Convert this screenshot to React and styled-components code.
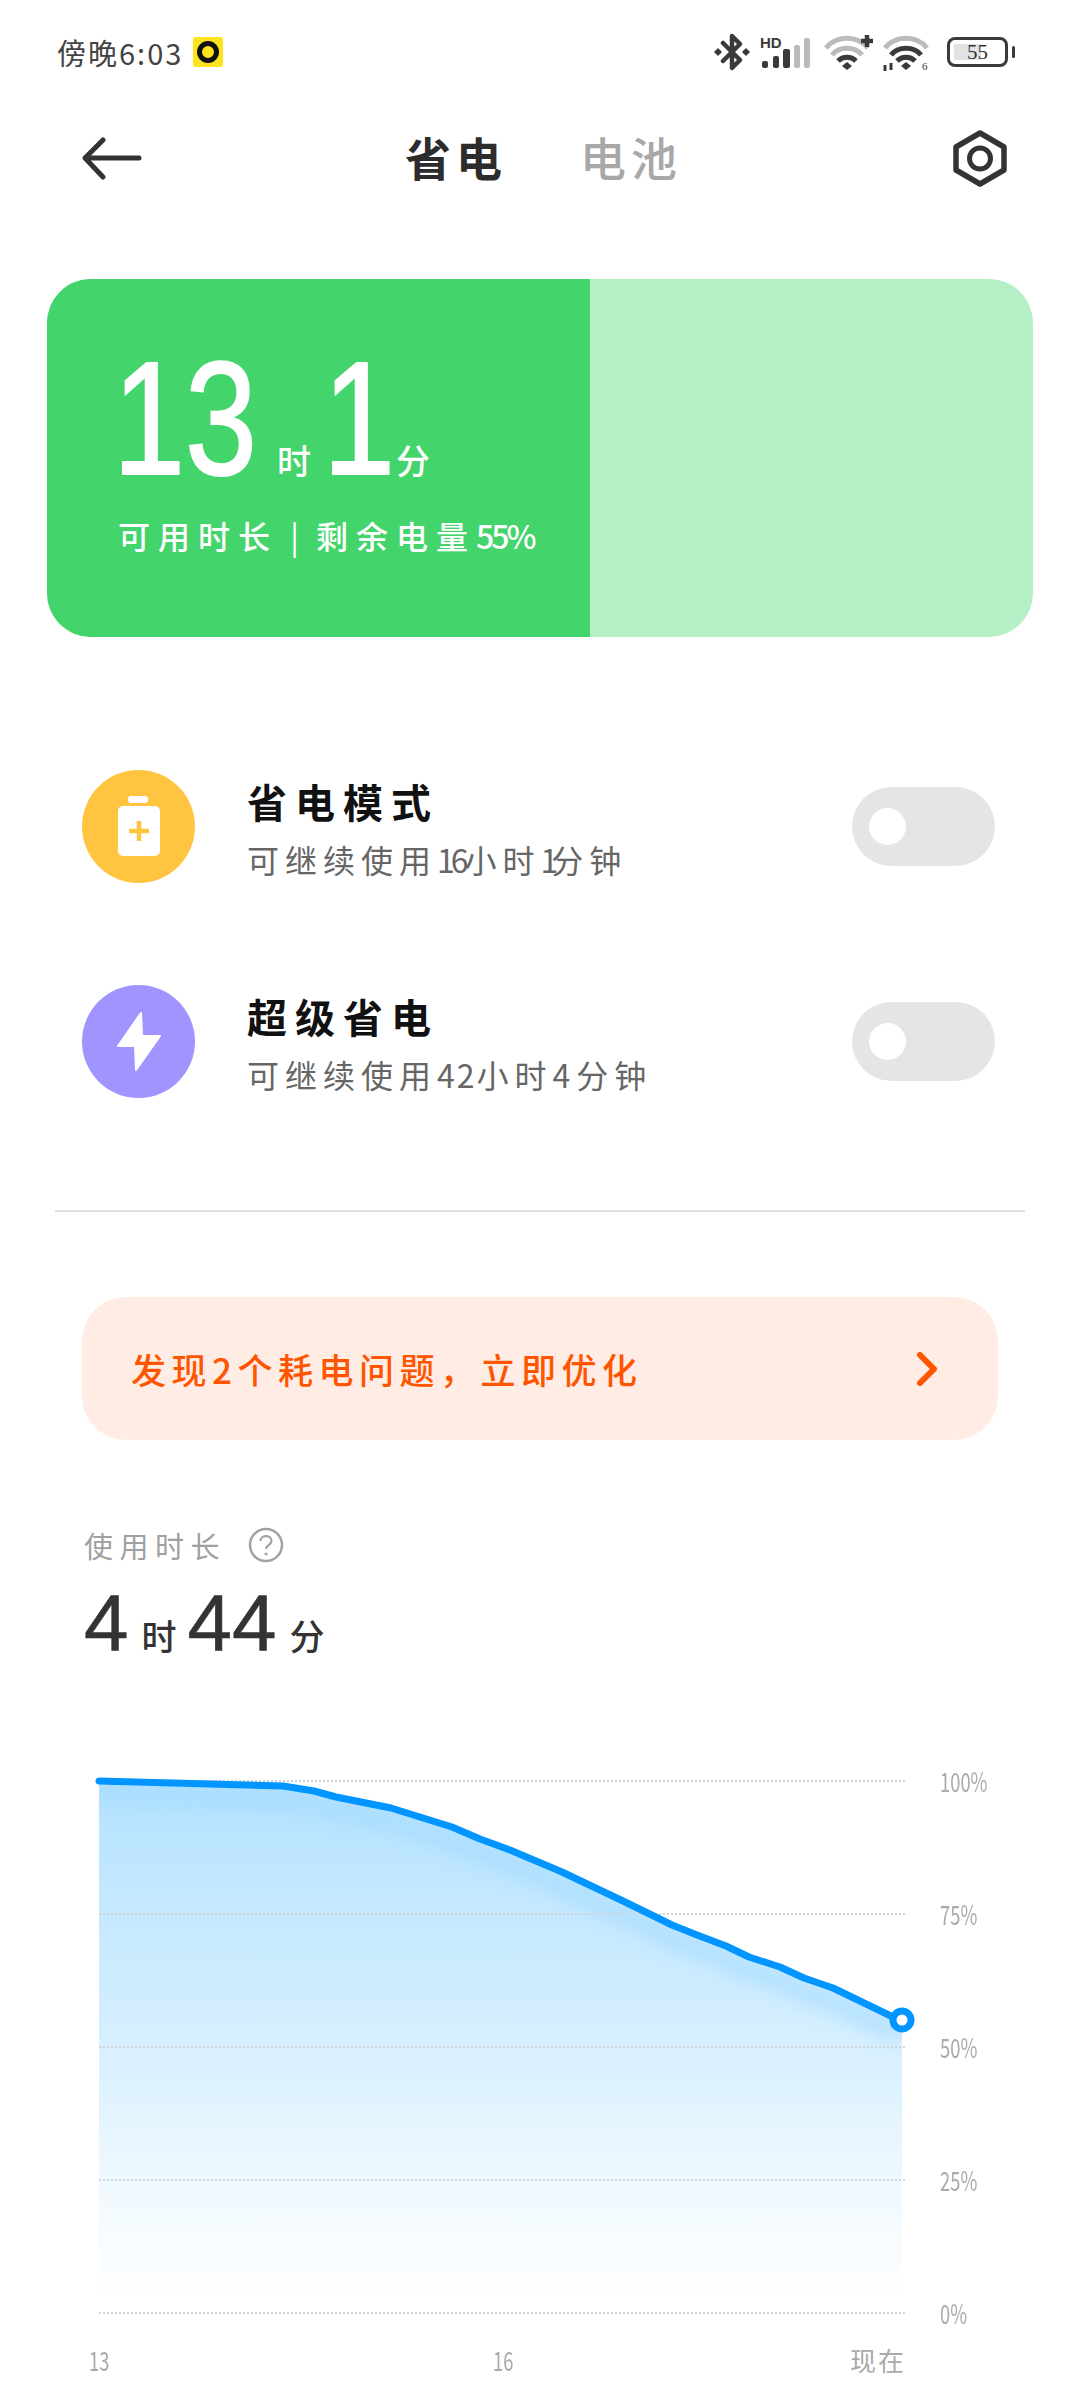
import React from "react";
import styled, { createGlobalStyle } from "styled-components";

const CJK = `"Noto Sans CJK SC", "Noto Sans", sans-serif`;
const SANS = `"Liberation Sans", "Noto Sans CJK SC", sans-serif`;

const Global = createGlobalStyle`
  html, body { margin: 0; padding: 0; background: #fff; }
  * { box-sizing: border-box; }
  #root { width: 1080px; height: 2400px; overflow: hidden; }
`;

const Page = styled.div`
  width: 1080px;
  height: 2400px;
  background: #fff;
  font-family: ${CJK};
  color: #333;
`;

const StatusBar = styled.div`
  height: 104px;
  display: flex;
  align-items: center;
  padding: 0 65px 0 57px;
  justify-content: space-between;
`;
const StatusLeft = styled.div`
  display: flex;
  align-items: center;
  gap: 10px;
`;
const Clock = styled.span`
  font-size: 29px;
  line-height: 30px;
  color: #444;
  letter-spacing: 2px;
`;
const Badge = styled.div`
  width: 30px;
  height: 30px;
  border-radius: 3px;
  background: #ffe31c;
  display: flex;
  align-items: center;
  justify-content: center;
`;
const BadgeRing = styled.div`
  width: 22px;
  height: 22px;
  border-radius: 50%;
  border: 5px solid #111;
`;
const StatusRight = styled.div`
  display: flex;
  align-items: center;
`;
const Battery = styled.div`
  display: flex;
  align-items: center;
  gap: 4px;
  margin-left: 14px;
`;
const BatteryBody = styled.div`
  position: relative;
  width: 61px;
  height: 30px;
  border: 3px solid #3a3a3a;
  border-radius: 8px;
  display: flex;
  align-items: center;
  justify-content: center;
  font-family: "Liberation Serif", serif;
  font-size: 21px;
  color: #333;
`;
const BatteryFill = styled.div`
  position: absolute;
  left: 4px;
  top: 4px;
  bottom: 4px;
  width: 27px;
  background: #e2e2e2;
`;
const BatteryText = styled.span`
  position: relative;
  line-height: 1;
`;
const BatteryNub = styled.div`
  width: 3px;
  height: 12px;
  border-radius: 2px;
  background: #3a3a3a;
`;

const Nav = styled.div`
  height: 108px;
  display: flex;
  align-items: center;
  justify-content: space-between;
  padding: 0 70px 0 81px;
`;
const Tabs = styled.div`
  display: flex;
  gap: 73px;
  margin: 0 0 4px -6px;
`;
const Tab = styled.span`
  font-size: 46px;
  line-height: 50px;
  letter-spacing: 5px;
  font-weight: ${(p) => (p.$active ? 700 : 500)};
  color: ${(p) => (p.$active ? "#2c2c2c" : "#a8a8a8")};
`;

const Card = styled.div`
  margin: 67px 47px 0 47px;
  height: 358px;
  border-radius: 44px;
  background: #b5efc6;
  overflow: hidden;
`;
const CardFill = styled.div`
  width: 543px;
  height: 100%;
  background: #43d46c;
  color: #fff;
  padding: 68px 0 0 71px;
`;
const BigValue = styled.div`
  display: flex;
  align-items: baseline;
  height: 142px;
  margin-left: -5px;
`;
const BigNumber = styled.span`
  display: inline-block;
  width: ${(p) => p.$w}px;
  font-family: ${SANS};
  font-size: 162px;
  line-height: 142px;
  -webkit-text-stroke: 2px #fff;
  transform: scaleX(0.8);
  transform-origin: left center;
  margin-right: ${(p) => p.$gap}px;
`;
const BigUnit = styled.span`
  font-size: 34px;
  line-height: 40px;
  font-weight: 500;
  margin-right: ${(p) => p.$gap}px;
`;
const CardCaption = styled.div`
  margin-top: 28px;
  font-size: 32px;
  line-height: 36px;
  letter-spacing: 8px;
  font-weight: 500;
  white-space: nowrap;
`;
const Sep = styled.span`
  letter-spacing: 5px;
  font-weight: 400;
`;
const Digits = styled.span`
  letter-spacing: ${(p) => p.$ls}px;
`;

const Rows = styled.div`
  margin-top: 133px;
  padding: 0 85px 0 82px;
  display: flex;
  flex-direction: column;
  gap: 102px;
`;
const Row = styled.div`
  display: flex;
  align-items: center;
  height: 113px;
`;
const RowIcon = styled.div`
  width: 113px;
  height: 113px;
  border-radius: 50%;
  background: ${(p) => p.$color};
  display: flex;
  align-items: center;
  justify-content: center;
  flex: none;
`;
const RowText = styled.div`
  margin-left: 52px;
  flex: 1;
  display: flex;
  flex-direction: column;
  gap: 18px;
  padding-top: 2px;
`;
const RowTitle = styled.div`
  font-size: 40px;
  line-height: 44px;
  letter-spacing: 8px;
  font-weight: 700;
  color: #111;
`;
const RowSub = styled.div`
  font-size: 32px;
  line-height: 36px;
  letter-spacing: 6px;
  color: #666;
  white-space: nowrap;
`;
const Toggle = styled.div`
  width: 143px;
  height: 79px;
  border-radius: 40px;
  background: #e5e5e5;
  display: flex;
  align-items: center;
  padding-left: 17px;
`;
const Knob = styled.div`
  width: 37px;
  height: 37px;
  border-radius: 50%;
  background: #fff;
`;

const Divider = styled.div`
  margin: 112px 55px 0;
  height: 2px;
  background: #e0e0e4;
`;

const Banner = styled.div`
  margin: 85px 82px 0;
  height: 143px;
  border-radius: 44px;
  background: #ffede5;
  display: flex;
  align-items: center;
  justify-content: space-between;
  padding: 0 60px 0 49px;
`;
const BannerText = styled.span`
  font-size: 35px;
  line-height: 40px;
  letter-spacing: 5.500px;
  font-weight: 500;
  color: #ff5500;
`;

const Usage = styled.div`
  margin-top: 87px;
  padding-left: 84px;
`;
const UsageHead = styled.div`
  display: flex;
  align-items: center;
  height: 36px;
  gap: 22px;
`;
const UsageLabel = styled.span`
  font-size: 29px;
  line-height: 36px;
  letter-spacing: 6.500px;
  color: #a0a0a0;
`;
const UsageValue = styled.div`
  display: flex;
  align-items: baseline;
  margin-top: 20px;
  font-family: ${SANS};
  color: #333;
`;
const UsageNumber = styled.span`
  font-size: 80px;
  line-height: 80px;
  -webkit-text-stroke: 0.6px #333;
  margin-right: ${(p) => p.$gap}px;
`;
const UsageUnit = styled.span`
  font-size: 35px;
  line-height: 40px;
  font-weight: 500;
  margin-right: ${(p) => p.$gap}px;
`;

const ChartRow = styled.div`
  margin-top: 106px;
  padding-left: 85px;
  display: flex;
  height: 556px;
`;
const YLabels = styled.div`
  margin-left: 15px;
  display: grid;
  grid-auto-rows: 133px;
`;
const YLabel = styled.span`
  display: block;
  width: 70px;
  font-size: 27px;
  line-height: 24px;
  color: #aaa;
  transform: scaleX(0.68);
  transform-origin: left center;
`;
const XLabels = styled.div`
  margin-top: 21px;
  padding-left: 89px;
  display: grid;
  grid-template-columns: 404px 357px 1fr;
`;
const XLabel = styled.span`
  display: block;
  font-size: 27px;
  line-height: 28px;
  color: #aaa;
  transform: scaleX(0.68);
  transform-origin: left center;
`;
const XLabelNow = styled.span`
  font-size: 26px;
  line-height: 28px;
  letter-spacing: 2px;
  color: #aaa;
`;

const LINE =
  "99,1781 283,1786 314,1791 336,1797 391,1808 452,1827 480,1839 510,1850 562,1872 623,1901 672,1925 697,1935 726,1946 749,1957 780,1967 804,1978 833,1988 893,2017 902,2020";

const Back = () => (
  <svg width="62" height="44" viewBox="81 136 62 44" fill="none" stroke="#333" strokeWidth="5" strokeLinecap="round" strokeLinejoin="round">
    <path d="M86 158H139M103 140 85 158 103 177" />
  </svg>
);
const Gear = () => (
  <svg width="60" height="62" viewBox="950 127 60 62" fill="none" stroke="#333" strokeWidth="5.500" strokeLinejoin="round">
    <path d="M980 133 1004 147V170L980 184 956 170V147Z" />
    <circle cx="980" cy="158.500" r="10.500" strokeWidth="5" />
  </svg>
);
const Bluetooth = () => (
  <svg width="38" height="38" viewBox="0 0 38 38" fill="none" stroke="#3a3a3a" strokeWidth="4.500" strokeLinejoin="round" strokeLinecap="round">
    <path d="M10 10 27 27 19 35V3L27 11 10 28" />
    <path d="M1 19 5 15 9 19 5 23ZM29 19 33 15 37 19 33 23Z" fill="#3a3a3a" stroke="none" />
  </svg>
);
const SignalSvg = styled.svg`
  margin-left: 9px;
`;
const Signal = () => (
  <SignalSvg width="52" height="34" viewBox="0 0 52 34">
    <text x="0" y="13" fontFamily="Liberation Sans" fontWeight="700" fontSize="15" fill="#3a3a3a">HD</text>
    <rect x="2" y="26" width="6" height="7" rx="2" fill="#3a3a3a" />
    <rect x="13" y="21" width="6" height="12" rx="2" fill="#3a3a3a" />
    <rect x="23" y="14" width="7" height="19" rx="2" fill="#3a3a3a" />
    <rect x="34" y="10" width="6" height="23" rx="2" fill="#bbb" />
    <rect x="44" y="3" width="6" height="30" rx="2" fill="#bbb" />
  </SignalSvg>
);
const WifiSvg = styled.svg`
  margin-left: ${(p) => p.$gap}px;
`;
const Wifi = ({ plus }) => (
  <WifiSvg $gap={plus ? 12 : 9} width="50" height="38" viewBox="0 0 50 38" fill="none" strokeWidth="5">
    <path d="M2 15C12 2 34 2 44 15" stroke="#bbb" />
    <path d="M8 22C15 13 31 13 38 22" stroke={plus ? "#bbb" : "#3a3a3a"} />
    <path d="M14 28C19 23 27 23 32 28" stroke="#3a3a3a" />
    <path d="M23 29 28 33 23 37 18 33Z" fill="#3a3a3a" />
    {plus ? (
      <path d="M37 8H49M43 2V14" stroke="#3a3a3a" strokeWidth="4.500" />
    ) : (
      <>
        <path d="M2 32V38M8 30V37" stroke="#3a3a3a" strokeWidth="3" />
        <text x="39" y="37" fontFamily="Liberation Serif" fontSize="11" fill="#3a3a3a">6</text>
      </>
    )}
  </WifiSvg>
);
const BatteryGlyph = () => (
  <svg width="44" height="62" viewBox="0 0 44 62" fill="#fff">
    <rect x="11" y="0" width="20" height="7" rx="3" />
    <rect x="1" y="10" width="42" height="50" rx="5" />
    <path d="M22 25V45M12 35H32" stroke="#ffc440" strokeWidth="4.500" />
  </svg>
);
const Bolt = () => (
  <svg width="46" height="62" viewBox="116 1011 46 62" fill="#fff" stroke="#fff" strokeWidth="2" strokeLinejoin="round">
    <path d="M141 1013 118 1046H135L136 1070 160 1036H142Z" />
  </svg>
);
const Chevron = () => (
  <svg width="22" height="34" viewBox="0 0 22 34" fill="none" stroke="#ff5500" strokeWidth="6" strokeLinecap="round" strokeLinejoin="round">
    <path d="M4 3 18 17 4 31" />
  </svg>
);
const Help = () => (
  <svg width="36" height="36" viewBox="0 0 36 36" fill="none">
    <circle cx="18" cy="18" r="16" stroke="#a3a3a3" strokeWidth="2.500" />
    <path d="M12.500 14C12.500 7.500 23.500 7.500 23.500 14 23.500 18 18 18 18 22" stroke="#a3a3a3" strokeWidth="2.200" />
    <circle cx="18" cy="27" r="1.600" fill="#a3a3a3" />
  </svg>
);

const Chart = () => {
  const area = `M${LINE.replace(/ /g, " L")} L902,2313 L99,2313 Z`;
  return (
    <svg width="840" height="556" viewBox="85 1769 840 556" fill="none">
      <defs>
        <linearGradient id="areaFill" x1="0" y1="1781" x2="0" y2="2300" gradientUnits="userSpaceOnUse">
          <stop offset="0" stopColor="#b4e2ff" />
          <stop offset="0.5" stopColor="#d6efff" />
          <stop offset="0.76" stopColor="#eef8ff" />
          <stop offset="1" stopColor="#ffffff" />
        </linearGradient>
        <clipPath id="areaClip">
          <path d={area} />
        </clipPath>
        <filter id="soft" x="-10%" y="-10%" width="120%" height="120%">
          <feGaussianBlur stdDeviation="8" />
        </filter>
      </defs>
      <path d={area} fill="url(#areaFill)" />
      <g clipPath="url(#areaClip)">
        <polyline points={LINE} transform="translate(0 14)" stroke="#9fd9ff" strokeWidth="20" opacity="0.55" filter="url(#soft)" />
      </g>
      {[1781, 1914, 2047, 2180, 2313].map((y) => (
        <line key={y} x1="99" x2="906" y1={y} y2={y} stroke="#cfd3d6" strokeWidth="2" strokeDasharray="2 2" />
      ))}
      <polyline points={LINE} stroke="#0095ff" strokeWidth="7" strokeLinecap="round" strokeLinejoin="round" />
      <circle cx="902" cy="2020" r="9" fill="#fff" stroke="#0095ff" strokeWidth="7" />
    </svg>
  );
};

export default function App() {
  return (
    <Page>
      <Global />
      <StatusBar>
        <StatusLeft>
          <Clock>傍晚6:03</Clock>
          <Badge><BadgeRing /></Badge>
        </StatusLeft>
        <StatusRight>
          <Bluetooth />
          <Signal />
          <Wifi plus />
          <Wifi />
          <Battery>
            <BatteryBody>
              <BatteryFill />
              <BatteryText>55</BatteryText>
            </BatteryBody>
            <BatteryNub />
          </Battery>
        </StatusRight>
      </StatusBar>
      <Nav>
        <Back />
        <Tabs>
          <Tab $active>省电</Tab>
          <Tab>电池</Tab>
        </Tabs>
        <Gear />
      </Nav>
      <Card>
        <CardFill>
          <BigValue>
            <BigNumber $w={146} $gap={18}>13</BigNumber>
            <BigUnit $gap={12}>时</BigUnit>
            <BigNumber $w={73} $gap={0}>1</BigNumber>
            <BigUnit $gap={0}>分</BigUnit>
          </BigValue>
          <CardCaption>
            可用时长<Sep> | </Sep>剩余电量<Digits $ls={-3}>55%</Digits>
          </CardCaption>
        </CardFill>
      </Card>
      <Rows>
        <Row>
          <RowIcon $color="#ffc440"><BatteryGlyph /></RowIcon>
          <RowText>
            <RowTitle>省电模式</RowTitle>
            <RowSub>可继续使用<Digits $ls={-4}>16</Digits>小时<Digits $ls={-7}>1</Digits>分钟</RowSub>
          </RowText>
          <Toggle><Knob /></Toggle>
        </Row>
        <Row>
          <RowIcon $color="#a095ff"><Bolt /></RowIcon>
          <RowText>
            <RowTitle>超级省电</RowTitle>
            <RowSub>可继续使用<Digits $ls={2}>42</Digits>小时<Digits $ls={6}>4</Digits>分钟</RowSub>
          </RowText>
          <Toggle><Knob /></Toggle>
        </Row>
      </Rows>
      <Divider />
      <Banner>
        <BannerText>发现2个耗电问题，立即优化</BannerText>
        <Chevron />
      </Banner>
      <Usage>
        <UsageHead>
          <UsageLabel>使用时长</UsageLabel>
          <Help />
        </UsageHead>
        <UsageValue>
          <UsageNumber $gap={13}>4</UsageNumber>
          <UsageUnit $gap={11}>时</UsageUnit>
          <UsageNumber $gap={13}>44</UsageNumber>
          <UsageUnit $gap={0}>分</UsageUnit>
        </UsageValue>
      </Usage>
      <ChartRow>
        <Chart />
        <YLabels>
          <YLabel>100%</YLabel>
          <YLabel>75%</YLabel>
          <YLabel>50%</YLabel>
          <YLabel>25%</YLabel>
          <YLabel>0%</YLabel>
        </YLabels>
      </ChartRow>
      <XLabels>
        <XLabel>13</XLabel>
        <XLabel>16</XLabel>
        <XLabelNow>现在</XLabelNow>
      </XLabels>
    </Page>
  );
}
